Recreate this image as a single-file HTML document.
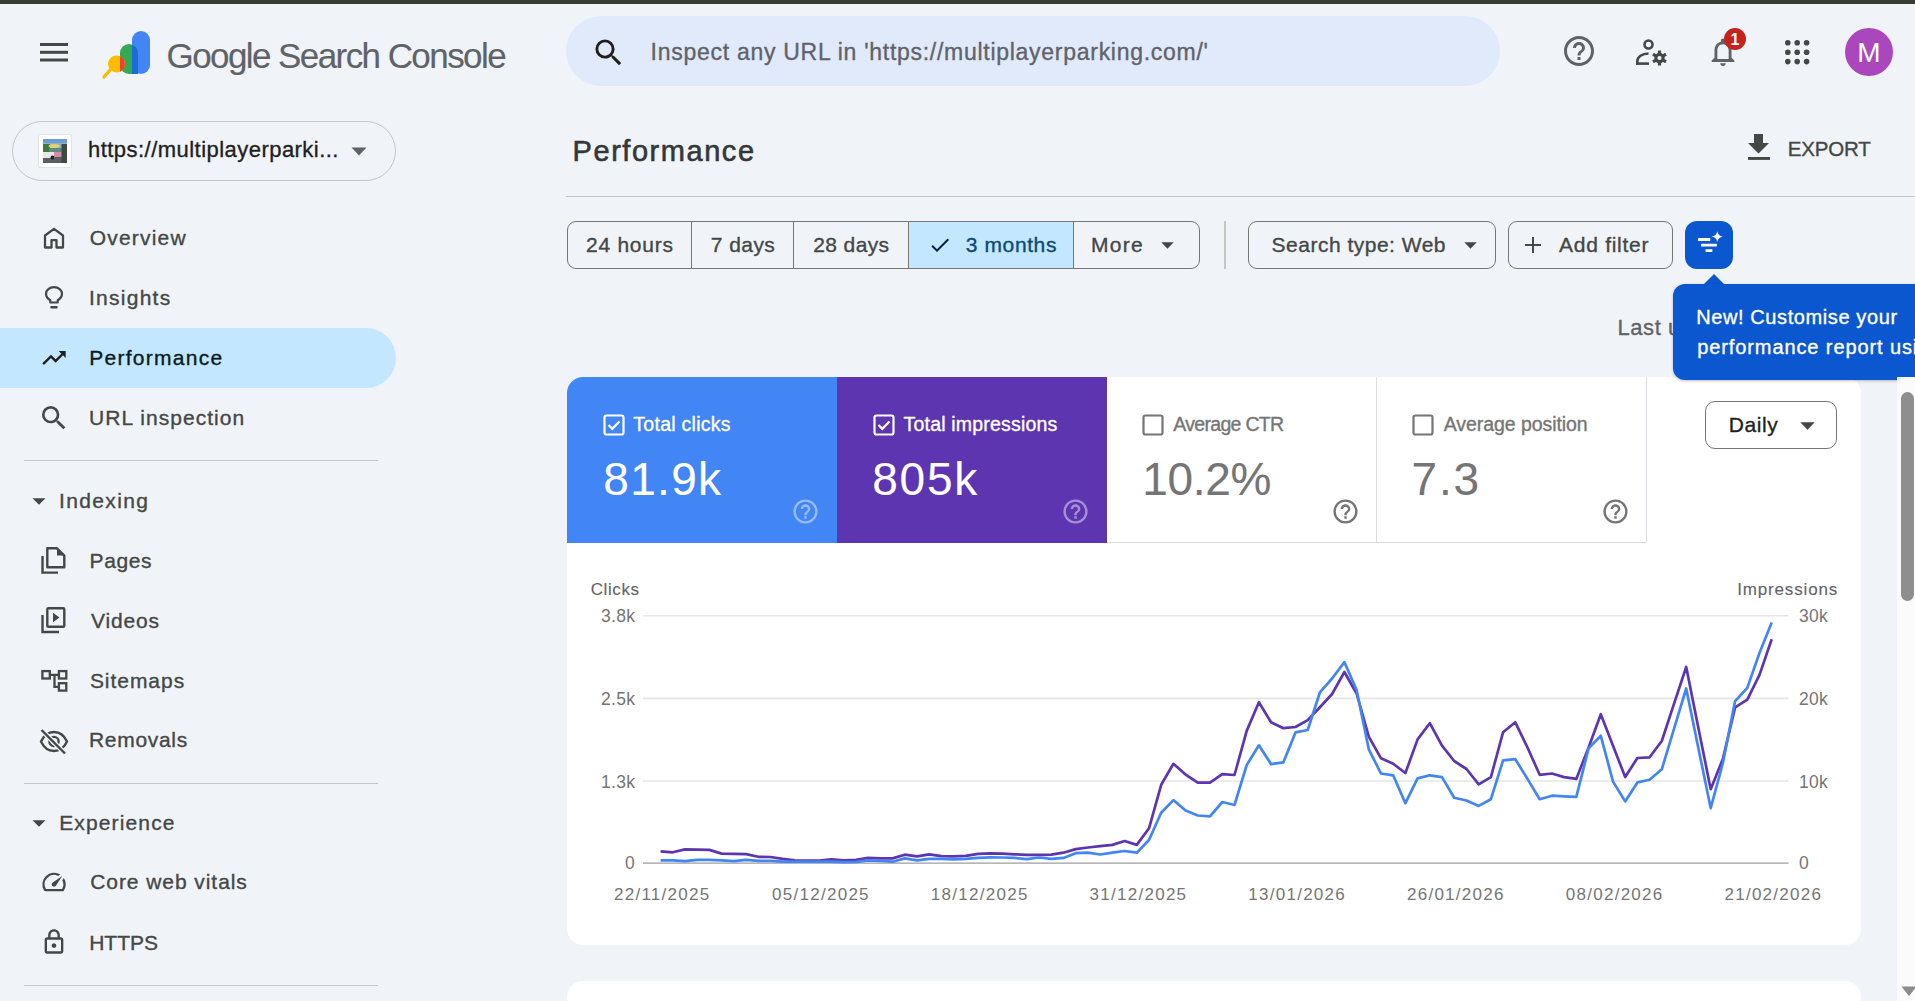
<!DOCTYPE html>
<html><head><meta charset="utf-8">
<style>
*{box-sizing:border-box;margin:0;padding:0}
html,body{width:1915px;height:1001px;overflow:hidden;background:#f0f4f9;font-family:"Liberation Sans",sans-serif;color:#1f1f1f}
.a{position:absolute}
.t{position:absolute;white-space:nowrap;line-height:1;-webkit-text-stroke:0.35px currentColor}
.hr{position:absolute;height:1px;background:#c7c7c7}
.xl{-webkit-text-stroke:0 !important;top:886.2px;width:120px;text-align:center;font-size:17px;color:#757575;letter-spacing:1.27px;text-indent:3.3px}
.yl{-webkit-text-stroke:0 !important;font-size:17.5px;color:#757575;letter-spacing:0.3px}
svg{position:absolute;overflow:visible}
</style></head><body>
<div class="a" style="left:0;top:0;width:1915px;height:4px;background:#373d31"></div>

<!-- hamburger -->
<svg style="left:40px;top:43px" width="28" height="19" viewBox="0 0 28 19"><rect x="0" y="0" width="28" height="3" fill="#444746"/><rect x="0" y="7.8" width="28" height="3" fill="#444746"/><rect x="0" y="15.5" width="28" height="3" fill="#444746"/></svg>

<!-- logo -->
<svg style="left:100px;top:28px" width="54" height="52" viewBox="0 0 54 52">
  <rect x="32" y="3" width="18" height="43" rx="9" fill="#4285f4"/>
  <path d="M20 25 a9 9 0 0 1 18 0 V46 H29 a9 9 0 0 1 -9 -9z" fill="#34a853"/>
  <path d="M32 17 a9 9 0 0 1 6 8 V46 H32z" fill="#1a6dd9"/>
  <line x1="4" y1="49" x2="10" y2="42" stroke="#fbbc04" stroke-width="3.4" stroke-linecap="round"/>
  <circle cx="16.5" cy="36" r="8.5" fill="#fbbc04"/>
  <path d="M20 28.3 a8.5 8.5 0 0 1 0 15.4z" fill="#ea4335"/>
</svg>
<div class="t" style="left:166.5px;top:38.4px;font-size:35px;letter-spacing:-1.575px;color:#5f6368;-webkit-text-stroke:0.15px currentColor">Google Search Console</div>

<!-- search -->
<div class="a" style="left:566px;top:16px;width:934px;height:70px;border-radius:35px;background:#e1eafb"></div>
<svg style="left:591px;top:35px" width="35.4" height="35.4" viewBox="0 0 24 24"><path fill="#1f1f1f" d="M15.5 14h-.79l-.28-.27A6.471 6.471 0 0 0 16 9.5 6.5 6.5 0 1 0 9.5 16c1.61 0 3.09-.59 4.23-1.57l.27.28v.79l5 4.99L20.49 19l-4.99-5zm-6 0C7.01 14 5 11.99 5 9.5S7.01 5 9.5 5 14 7.01 14 9.5 11.99 14 9.5 14z"/></svg>
<div class="t" style="left:650.6px;top:40.6px;font-size:23px;letter-spacing:0.722px;color:#5f6368;">Inspect any URL in 'https://multiplayerparking.com/'</div>

<!-- right icons -->
<svg style="left:1561px;top:33px" width="36" height="36" viewBox="0 0 24 24"><path fill="#5f6368" d="M11 18h2v-2h-2v2zm1-16C6.48 2 2 6.48 2 12s4.48 10 10 10 10-4.48 10-10S17.52 2 12 2zm0 18c-4.41 0-8-3.59-8-8s3.59-8 8-8 8 3.59 8 8-3.59 8-8 8zm0-14c-2.21 0-4 1.79-4 4h2c0-1.1.9-2 2-2s2 .9 2 2c0 2-3 1.75-3 5h2c0-2.25 3-2.5 3-5 0-2.21-1.79-4-4-4z"/></svg>
<svg style="left:1636px;top:39px" width="32" height="27" viewBox="0 0 32 27">
  <circle cx="12.5" cy="5.5" r="4" fill="none" stroke="#444746" stroke-width="2.6"/>
  <path d="M1.3 25.5 V22.5 C1.3 18 6 14.5 12.5 14.5" fill="none" stroke="#444746" stroke-width="2.6"/>
  <line x1="0" y1="24.6" x2="13" y2="24.6" stroke="#444746" stroke-width="2.6"/>
  <g transform="translate(23.5 19)" fill="#444746">
    <circle r="5.2"/>
    <rect x="-1.6" y="-7.6" width="3.2" height="15.2" rx="0.5"/>
    <rect x="-1.6" y="-7.6" width="3.2" height="15.2" rx="0.5" transform="rotate(60)"/>
    <rect x="-1.6" y="-7.6" width="3.2" height="15.2" rx="0.5" transform="rotate(120)"/>
  </g>
  <circle cx="23.5" cy="19" r="2.1" fill="#f0f4f9"/>
</svg>
<svg style="left:1706px;top:35px" width="34" height="34" viewBox="0 0 24 24"><path fill="#5f6368" d="M12 22c1.1 0 2-.9 2-2h-4c0 1.1.9 2 2 2zm6-6v-5c0-3.07-1.64-5.64-4.5-6.32V4c0-.83-.67-1.5-1.5-1.5s-1.5.67-1.5 1.5v.68C7.63 5.36 6 7.92 6 11v5l-2 2v1h16v-1l-2-2zm-2 1H8v-6c0-2.48 1.51-4.5 4-4.5s4 2.02 4 4.5v6z"/></svg>
<div class="a" style="left:1724px;top:28px;width:22px;height:22px;border-radius:50%;background:#c5221f;color:#fff;font-size:16px;font-weight:bold;text-align:center;line-height:23px">1</div>
<svg style="left:1785px;top:40px" width="25" height="25" viewBox="0 0 25 25" fill="#444746">
  <circle cx="2.8" cy="2.8" r="2.8"/><circle cx="12.2" cy="2.8" r="2.8"/><circle cx="21.6" cy="2.8" r="2.8"/>
  <circle cx="2.8" cy="12.2" r="2.8"/><circle cx="12.2" cy="12.2" r="2.8"/><circle cx="21.6" cy="12.2" r="2.8"/>
  <circle cx="2.8" cy="21.6" r="2.8"/><circle cx="12.2" cy="21.6" r="2.8"/><circle cx="21.6" cy="21.6" r="2.8"/>
</svg>
<div class="a" style="left:1845px;top:28px;width:48px;height:48px;border-radius:50%;background:#ab47bc;color:#fff;font-size:28px;text-align:center;line-height:49px">M</div>

<!-- property pill -->
<div class="a" style="left:12px;top:121px;width:384px;height:60px;border:1px solid #c4c7c5;border-radius:30px"></div>
<div class="a" style="left:38px;top:134px;width:34px;height:34px;background:#fff;border:1px solid #e3e3e3;border-radius:2px"></div>
<svg style="left:43px;top:139px" width="24" height="24" viewBox="0 0 24 24">
<rect width="24" height="24" fill="#8fb0c8"/>
<rect y="0" width="24" height="4" fill="#6e9bd0"/>
<rect x="0" y="5" width="7" height="9" fill="#3f7a3a"/>
<rect x="6" y="9" width="13" height="5" fill="#5d8c86"/>
<ellipse cx="11" cy="7" rx="5.5" ry="2" fill="#e6d26a"/>
<rect x="0" y="18" width="24" height="6" fill="#5b5f63"/>
<rect x="0" y="13" width="12" height="6" fill="#e8e8ea"/>
<rect x="11" y="13" width="8" height="5" fill="#d78aa8"/>
<circle cx="9.5" cy="18.5" r="2" fill="#222"/>
<rect x="18.5" y="5" width="5.5" height="19" fill="#3d4a40"/>
</svg>
<div class="t" style="left:88.0px;top:139.2px;font-size:22px;letter-spacing:0.462px;color:#1f1f1f;">https://multiplayerparki...</div>
<svg style="left:351px;top:147px" width="16" height="9" viewBox="0 0 16 9"><path d="M0.5 0.5h15L8 8.5z" fill="#5f6368"/></svg>

<!-- nav -->
<div class="a" style="left:0;top:328px;width:396px;height:60px;background:#c2e7ff;border-radius:0 30px 30px 0"></div>
<div class="t" style="left:89.8px;top:227.4px;font-size:21px;letter-spacing:1.186px;color:#444746;">Overview</div>
<div class="t" style="left:89.0px;top:287.2px;font-size:21px;letter-spacing:1.257px;color:#444746;">Insights</div>
<div class="t" style="left:89.2px;top:347.2px;font-size:21px;letter-spacing:1.28px;color:#0b1a24;">Performance</div>
<div class="t" style="left:89.1px;top:407.3px;font-size:21px;letter-spacing:1.038px;color:#444746;">URL inspection</div>
<div class="t" style="left:59.0px;top:490.2px;font-size:21px;letter-spacing:1.357px;color:#444746;">Indexing</div>
<div class="t" style="left:89.5px;top:550.2px;font-size:21px;letter-spacing:0.625px;color:#444746;">Pages</div>
<div class="t" style="left:90.9px;top:610.2px;font-size:21px;letter-spacing:0.88px;color:#444746;">Videos</div>
<div class="t" style="left:89.9px;top:669.8px;font-size:21px;letter-spacing:0.957px;color:#444746;">Sitemaps</div>
<div class="t" style="left:89.0px;top:729.2px;font-size:21px;letter-spacing:0.686px;color:#444746;">Removals</div>
<div class="t" style="left:59.2px;top:811.8px;font-size:21px;letter-spacing:1.133px;color:#444746;">Experience</div>
<div class="t" style="left:90.2px;top:870.9px;font-size:21px;letter-spacing:0.936px;color:#444746;">Core web vitals</div>
<div class="t" style="left:89.2px;top:931.6px;font-size:21px;letter-spacing:-0.025px;color:#444746;">HTTPS</div>
<div class="hr" style="left:24px;top:460px;width:354px"></div>
<div class="hr" style="left:24px;top:783px;width:354px"></div>
<div class="hr" style="left:24px;top:985px;width:354px"></div>
<!-- nav icons -->
<svg style="left:43px;top:227px" width="22" height="22" viewBox="0 0 22 22"><path d="M2 20.5 V8.5 L11 1.8 L20 8.5 V20.5 H13.5 V13.2 H8.5 V20.5 Z" fill="none" stroke="#444746" stroke-width="2.3" stroke-linejoin="round"/></svg>
<svg style="left:44px;top:286px" width="20" height="24" viewBox="0 0 20 24"><path d="M6.3 16.5 V14.2 C3.6 12.6 2 10.4 2 7.7 C2 4.2 5.5 1.2 10 1.2 C14.5 1.2 18 4.2 18 7.7 C18 10.4 16.4 12.6 13.7 14.2 V16.5 Z" fill="none" stroke="#444746" stroke-width="2.2" stroke-linejoin="round"/><rect x="6.3" y="20" width="7.4" height="2.4" rx="1" fill="#444746"/></svg>
<svg style="left:40px;top:344px" width="28" height="28" viewBox="0 0 24 24"><path fill="#1f1f1f" d="M16 6l2.29 2.29-4.88 4.88-4-4L2 16.59 3.41 18l6-6 4 4 6.3-6.29L22 12V6z"/></svg>
<svg style="left:38px;top:402px" width="32" height="32" viewBox="0 0 24 24"><path fill="#444746" d="M15.5 14h-.79l-.28-.27A6.471 6.471 0 0 0 16 9.5 6.5 6.5 0 1 0 9.5 16c1.61 0 3.09-.59 4.23-1.57l.27.28v.79l5 4.99L20.49 19l-4.99-5zm-6 0C7.01 14 5 11.99 5 9.5S7.01 5 9.5 5 14 7.01 14 9.5 11.99 14 9.5 14z"/></svg>
<svg style="left:32px;top:498px" width="14" height="7" viewBox="0 0 14 7"><path d="M0.5 0.3h13L7 6.8z" fill="#444746"/></svg>
<svg style="left:32px;top:820px" width="14" height="7" viewBox="0 0 14 7"><path d="M0.5 0.3h13L7 6.8z" fill="#444746"/></svg>
<svg style="left:41px;top:547px" width="25" height="28" viewBox="0 0 25 28"><path d="M1.5 9 V25.6 H17" fill="none" stroke="#444746" stroke-width="2.4"/><path d="M6.3 1.3 H16 L23.3 8.6 V20.3 H6.3 Z" fill="none" stroke="#444746" stroke-width="2.4" stroke-linejoin="round"/><path d="M16 1.3 V8.6 H23.3z" fill="#444746"/></svg>
<svg style="left:41px;top:607px" width="25" height="27" viewBox="0 0 25 27"><path d="M1.5 8 V25 H18" fill="none" stroke="#444746" stroke-width="2.4"/><rect x="6.3" y="1.3" width="17" height="18.5" rx="1" fill="none" stroke="#444746" stroke-width="2.4"/><path d="M12 5.8 V15.2 L18.5 10.5z" fill="#444746"/></svg>
<svg style="left:41px;top:668px" width="26" height="25" viewBox="0 0 26 25" fill="none" stroke="#444746" stroke-width="2.3"><rect x="1.4" y="3.1" width="7.4" height="7.4"/><rect x="17.9" y="3.1" width="7.4" height="7.4"/><rect x="17.9" y="15.2" width="7.4" height="7.4"/><path d="M8.8 6.8 H17.9 M13.5 6.8 V18.9 H17.9"/></svg>
<svg style="left:38px;top:726px" width="32" height="32" viewBox="0 0 32 32"><path d="M3 15.5 C6 9 10.5 6 16 6 C21.5 6 26 9 29 15.5 C26 22 21.5 25 16 25 C10.5 25 6 22 3 15.5Z" fill="none" stroke="#444746" stroke-width="2.4"/><circle cx="16" cy="15.5" r="4.6" fill="none" stroke="#444746" stroke-width="2.4"/><line x1="3.5" y1="4" x2="27" y2="27.5" stroke="#f0f4f9" stroke-width="5"/><line x1="3.5" y1="4" x2="27" y2="27.5" stroke="#444746" stroke-width="2.4"/></svg>
<svg style="left:40px;top:868px" width="28" height="28" viewBox="0 0 24 24"><path fill="#444746" d="M20.38 8.57l-1.23 1.85a8 8 0 0 1-.22 7.58H5.07A8 8 0 0 1 15.58 6.85l1.85-1.23A10 10 0 0 0 3.35 19a2 2 0 0 0 1.72 1h13.85a2 2 0 0 0 1.74-1 10 10 0 0 0-.27-10.440zm-9.79 6.84a2 2 0 0 0 2.830 0l5.66-8.49-8.49 5.66a2 2 0 0 0 0 2.83z"/></svg>
<svg style="left:40px;top:928px" width="28" height="28" viewBox="0 0 24 24"><path fill="#444746" d="M18 8h-1V6c0-2.76-2.24-5-5-5S7 3.24 7 6v2H6c-1.1 0-2 .9-2 2v10c0 1.1.9 2 2 2h12c1.1 0 2-.9 2-2V10c0-1.1-.9-2-2-2zM9 6c0-1.66 1.34-3 3-3s3 1.34 3 3v2H9V6zm9 14H6V10h12v10zm-6-3c1.1 0 2-.9 2-2s-.9-2-2-2-2 .9-2 2 .9 2 2 2z"/></svg>

<!-- MAIN header -->
<div class="t" style="left:572.6px;top:136.5px;font-size:29px;letter-spacing:1.54px;color:#34373a;-webkit-text-stroke:0.6px currentColor">Performance</div>
<svg style="left:1748px;top:134px" width="22" height="26" viewBox="0 0 22 26"><path d="M6 0 H15 V9 H21 L10.5 19.5 L0 9 H6z" fill="#444746"/><rect x="0" y="23" width="22" height="2.9" fill="#444746"/></svg>
<div class="t" style="left:1787.8px;top:138.5px;font-size:20.5px;letter-spacing:-0.2px;color:#444746;">EXPORT</div>
<div class="hr" style="left:566px;top:196px;width:1349px;background:#c4c7c5"></div>

<!-- chips -->
<div class="a" style="left:908px;top:221px;width:166px;height:48px;background:#c2e7ff"></div>
<div class="a" style="left:567px;top:221px;width:633px;height:48px;border:1px solid #747775;border-radius:9px"></div>
<div class="a" style="left:691px;top:221px;width:1px;height:48px;background:#747775"></div>
<div class="a" style="left:793px;top:221px;width:1px;height:48px;background:#747775"></div>
<div class="a" style="left:908px;top:221px;width:1px;height:48px;background:#747775"></div>
<div class="a" style="left:1073px;top:221px;width:1px;height:48px;background:#747775"></div>
<svg style="left:928px;top:233px" width="24" height="24" viewBox="0 0 24 24"><path fill="#041e49" d="M9 16.17L4.83 12l-1.42 1.42L9 19 21 7l-1.41-1.41z"/></svg>
<svg style="left:1161px;top:242px" width="13" height="7" viewBox="0 0 13 7"><path d="M0.3 0.3h12.4L6.5 6.8z" fill="#444746"/></svg>
<div class="a" style="left:1224px;top:221px;width:2px;height:48px;background:#c4c7c5"></div>
<div class="a" style="left:1248px;top:221px;width:248px;height:48px;border:1px solid #747775;border-radius:9px"></div>
<svg style="left:1464px;top:242px" width="13" height="7" viewBox="0 0 13 7"><path d="M0.3 0.3h12.4L6.5 6.8z" fill="#444746"/></svg>
<div class="a" style="left:1508px;top:221px;width:165px;height:48px;border:1px solid #747775;border-radius:9px"></div>
<svg style="left:1521px;top:233px" width="24" height="24" viewBox="0 0 24 24"><path fill="#444746" d="M20 13h-7v7h-2v-7H4v-2h7V4h2v7h7v2z"/></svg>
<div class="t" style="left:586.0px;top:234.3px;font-size:21px;letter-spacing:0.743px;color:#444746;">24 hours</div>
<div class="t" style="left:710.8px;top:234.3px;font-size:21px;letter-spacing:0.44px;color:#444746;">7 days</div>
<div class="t" style="left:813.3px;top:234.3px;font-size:21px;letter-spacing:0.367px;color:#444746;">28 days</div>
<div class="t" style="left:965.8px;top:234.1px;font-size:21px;letter-spacing:0.6px;color:#0b4a73;">3 months</div>
<div class="t" style="left:1091.0px;top:234.3px;font-size:21px;letter-spacing:1.3px;color:#444746;">More</div>
<div class="t" style="left:1271.6px;top:234.3px;font-size:21px;letter-spacing:0.493px;color:#444746;">Search type: Web</div>
<div class="t" style="left:1559.0px;top:234.3px;font-size:21px;letter-spacing:0.733px;color:#444746;">Add filter</div>
<div class="a" style="left:1685px;top:221px;width:48px;height:48px;background:#0b57d0;border-radius:12px"></div>
<svg style="left:1690px;top:226px" width="36" height="36" viewBox="0 0 36 36" fill="#fff"><rect x="8" y="12.1" width="12.3" height="2.8" rx="0.4"/><rect x="11" y="17.8" width="15.9" height="2.7" rx="0.4"/><rect x="15.5" y="23.2" width="6.9" height="2.7" rx="0.4"/><path d="M27.3 5.2 Q28.2 9.9 32.8 10.6 Q28.2 11.4 27.3 16 Q26.4 11.4 21.8 10.6 Q26.4 9.9 27.3 5.2z"/></svg>
<div class="t" style="left:1617.4px;top:317.4px;font-size:22px;letter-spacing:0px;color:#5f6368;letter-spacing:0.6px">Last updated: 5 hours ago</div>

<!-- CARD -->
<div class="a" style="left:567px;top:377px;width:1294px;height:568px;background:#fff;border-radius:16px"></div>
<div class="a" style="left:567px;top:981px;width:1294px;height:40px;background:#fff;border-radius:16px"></div>
<div class="a" style="left:567px;top:377px;width:270px;height:166px;background:#4285f4;border-radius:16px 0 0 0"></div>
<div class="a" style="left:837px;top:377px;width:270px;height:166px;background:#5e35b1"></div>
<div class="a" style="left:1107px;top:542px;width:540px;height:1px;background:#dadce0"></div>
<div class="a" style="left:1376px;top:377px;width:1px;height:166px;background:#dadce0"></div>
<div class="a" style="left:1646px;top:377px;width:1px;height:166px;background:#dadce0"></div>
<!-- checkboxes -->
<svg style="left:602.8px;top:414.3px" width="22" height="22" viewBox="0 0 22 22"><rect x="1.5" y="1.5" width="19" height="19" rx="2" fill="none" stroke="#fff" stroke-width="2.2"/><path d="M5.5 11 L9.3 14.8 L16.5 7.5" fill="none" stroke="#fff" stroke-width="2.3"/></svg>
<svg style="left:872.8px;top:414.3px" width="22" height="22" viewBox="0 0 22 22"><rect x="1.5" y="1.5" width="19" height="19" rx="2" fill="none" stroke="#fff" stroke-width="2.2"/><path d="M5.5 11 L9.3 14.8 L16.5 7.5" fill="none" stroke="#fff" stroke-width="2.3"/></svg>
<svg style="left:1142px;top:414px" width="22" height="22" viewBox="0 0 22 22"><rect x="1.5" y="1.5" width="19" height="19" rx="2" fill="none" stroke="#757575" stroke-width="2.2"/></svg>
<svg style="left:1412px;top:414px" width="22" height="22" viewBox="0 0 22 22"><rect x="1.5" y="1.5" width="19" height="19" rx="2" fill="none" stroke="#757575" stroke-width="2.2"/></svg>
<div class="t" style="left:633.3px;top:415.4px;font-size:19.5px;letter-spacing:0.273px;color:#ffffff;">Total clicks</div>
<div class="t" style="left:603.3px;top:456.1px;font-size:46px;letter-spacing:1.3px;color:#ffffff;-webkit-text-stroke:0.1px currentColor">81.9k</div>
<div class="t" style="left:903.6px;top:415.4px;font-size:19.5px;letter-spacing:0.188px;color:#ffffff;">Total impressions</div>
<div class="t" style="left:872.3px;top:456.1px;font-size:46px;letter-spacing:1.733px;color:#ffffff;-webkit-text-stroke:0.1px currentColor">805k</div>
<div class="t" style="left:1173.3px;top:415.3px;font-size:19.5px;letter-spacing:-0.7px;color:#757575;">Average CTR</div>
<div class="t" style="left:1142.2px;top:456.1px;font-size:46px;letter-spacing:-0.3px;color:#757575;-webkit-text-stroke:0.1px currentColor">10.2%</div>
<div class="t" style="left:1443.7px;top:415.3px;font-size:19.5px;letter-spacing:-0.06px;color:#757575;">Average position</div>
<div class="t" style="left:1411.5px;top:456.1px;font-size:46px;letter-spacing:1.85px;color:#757575;-webkit-text-stroke:0.1px currentColor">7.3</div>
<!-- help icons -->
<svg style="left:791px;top:497px" width="29" height="29" viewBox="0 0 24 24"><path fill="rgba(255,255,255,0.45)" d="M11 18h2v-2h-2v2zm1-16C6.48 2 2 6.48 2 12s4.48 10 10 10 10-4.48 10-10S17.52 2 12 2zm0 18c-4.41 0-8-3.590-8-8s3.59-8 8-8 8 3.59 8 8-3.59 8-8 8zm0-14c-2.21 0-4 1.79-4 4h2c0-1.1.9-2 2-2s2 .9 2 2c0 2-3 1.75-3 5h2c0-2.25 3-2.5 3-5 0-2.21-1.79-4-4-4z"/></svg>
<svg style="left:1061px;top:497px" width="29" height="29" viewBox="0 0 24 24"><path fill="rgba(255,255,255,0.45)" d="M11 18h2v-2h-2v2zm1-16C6.48 2 2 6.48 2 12s4.48 10 10 10 10-4.48 10-10S17.52 2 12 2zm0 18c-4.41 0-8-3.590-8-8s3.59-8 8-8 8 3.59 8 8-3.59 8-8 8zm0-14c-2.21 0-4 1.79-4 4h2c0-1.1.9-2 2-2s2 .9 2 2c0 2-3 1.75-3 5h2c0-2.25 3-2.5 3-5 0-2.21-1.79-4-4-4z"/></svg>
<svg style="left:1331px;top:497px" width="29" height="29" viewBox="0 0 24 24"><path fill="#757575" d="M11 18h2v-2h-2v2zm1-16C6.48 2 2 6.48 2 12s4.48 10 10 10 10-4.48 10-10S17.52 2 12 2zm0 18c-4.41 0-8-3.590-8-8s3.59-8 8-8 8 3.59 8 8-3.59 8-8 8zm0-14c-2.21 0-4 1.79-4 4h2c0-1.1.9-2 2-2s2 .9 2 2c0 2-3 1.75-3 5h2c0-2.25 3-2.5 3-5 0-2.21-1.79-4-4-4z"/></svg>
<svg style="left:1601px;top:497px" width="29" height="29" viewBox="0 0 24 24"><path fill="#757575" d="M11 18h2v-2h-2v2zm1-16C6.48 2 2 6.48 2 12s4.48 10 10 10 10-4.48 10-10S17.52 2 12 2zm0 18c-4.41 0-8-3.590-8-8s3.59-8 8-8 8 3.59 8 8-3.59 8-8 8zm0-14c-2.21 0-4 1.79-4 4h2c0-1.1.9-2 2-2s2 .9 2 2c0 2-3 1.75-3 5h2c0-2.25 3-2.5 3-5 0-2.21-1.79-4-4-4z"/></svg>
<!-- daily -->
<div class="a" style="left:1705px;top:401px;width:132px;height:48px;border:1px solid #747775;border-radius:10px"></div>
<div class="t" style="left:1728.7px;top:414.4px;font-size:21px;letter-spacing:0.575px;color:#1f1f1f;">Daily</div>
<svg style="left:1800px;top:422px" width="15" height="8" viewBox="0 0 15 8"><path d="M0.3 0.3h14.4L7.5 7.8z" fill="#444746"/></svg>

<!-- chart -->
<div class="t" style="left:590.7px;top:581.4px;font-size:17px;letter-spacing:0.6px;color:#5f6368;-webkit-text-stroke:0.1px currentColor">Clicks</div>
<div class="t" style="left:1737.2px;top:581.4px;font-size:17px;letter-spacing:0.84px;color:#5f6368;-webkit-text-stroke:0.1px currentColor">Impressions</div>
<svg style="left:0;top:0" width="1915" height="1001">
  <g stroke="#e6e6e6" stroke-width="1.6">
    <line x1="643" y1="615.7" x2="1788.5" y2="615.7"/>
    <line x1="643" y1="698.4" x2="1788.5" y2="698.4"/>
    <line x1="643" y1="781" x2="1788.5" y2="781"/>
  </g>
  <line x1="643" y1="863.1" x2="1788.5" y2="863.1" stroke="#9e9e9e" stroke-width="1.4"/>
  <polyline points="660.6,851.4 672.8,852.3 685.0,849.4 697.2,849.7 709.4,849.9 721.6,853.6 733.9,853.9 746.1,854.1 758.3,856.8 770.5,857.0 782.7,858.8 794.9,860.3 807.1,860.6 819.3,860.5 831.5,859.4 843.7,860.4 856.0,859.9 868.2,857.9 880.4,858.4 892.6,858.4 904.8,854.7 917.0,856.4 929.2,854.4 941.4,856.1 953.6,856.4 965.8,855.9 978.1,853.9 990.3,853.4 1002.5,853.7 1014.7,854.3 1026.9,854.9 1039.1,854.8 1051.3,854.7 1063.5,852.7 1075.7,849.1 1087.9,847.5 1100.2,846.2 1112.4,844.9 1124.6,841.0 1136.8,844.9 1149.0,828.3 1161.2,784.8 1173.4,763.8 1185.6,774.6 1197.8,782.7 1210.0,782.7 1222.3,774.1 1234.5,775.0 1246.7,730.9 1258.9,702.2 1271.1,722.3 1283.3,728.2 1295.5,727.0 1307.7,720.1 1319.9,707.2 1332.1,694.0 1344.4,672.0 1356.6,693.5 1368.8,736.7 1381.0,758.3 1393.2,763.7 1405.4,773.0 1417.6,739.4 1429.8,723.2 1442.0,745.7 1454.2,761.0 1466.5,769.0 1478.7,784.3 1490.9,777.1 1503.1,732.2 1515.3,722.3 1527.5,747.5 1539.7,774.8 1551.9,773.5 1564.1,777.1 1576.3,778.9 1588.6,747.5 1600.8,714.2 1613.0,745.7 1625.2,777.1 1637.4,758.0 1649.6,757.3 1661.8,741.0 1674.0,703.8 1686.2,667.0 1698.4,728.0 1710.7,789.2 1722.9,758.8 1735.1,707.4 1747.3,699.6 1759.5,674.9 1771.7,639.3" fill="none" stroke="#5e35b1" stroke-width="2.7" stroke-linejoin="round"/>
  <polyline points="660.6,860.3 672.8,860.3 685.0,861.2 697.2,859.9 709.4,859.9 721.6,860.3 733.9,861.2 746.1,859.9 758.3,860.8 770.5,860.8 782.7,861.6 794.9,861.6 807.1,861.6 819.3,861.7 831.5,861.7 843.7,862.1 856.0,861.9 868.2,860.4 880.4,860.9 892.6,861.7 904.8,858.4 917.0,860.4 929.2,858.9 941.4,858.9 953.6,859.4 965.8,858.9 978.1,857.9 990.3,857.4 1002.5,857.5 1014.7,857.9 1026.9,859.2 1039.1,857.5 1051.3,858.8 1063.5,857.9 1075.7,853.2 1087.9,852.7 1100.2,854.5 1112.4,852.7 1124.6,851.0 1136.8,852.7 1149.0,840.0 1161.2,812.7 1173.4,800.1 1185.6,810.6 1197.8,815.5 1210.0,816.4 1222.3,802.0 1234.5,805.0 1246.7,765.1 1258.9,745.3 1271.1,764.2 1283.3,762.4 1295.5,732.4 1307.7,730.0 1319.9,692.3 1332.1,678.5 1344.4,662.1 1356.6,690.0 1368.8,749.3 1381.0,773.5 1393.2,775.3 1405.4,803.2 1417.6,778.4 1429.8,775.3 1442.0,777.1 1454.2,797.8 1466.5,800.5 1478.7,805.9 1490.9,799.2 1503.1,760.4 1515.3,759.2 1527.5,778.9 1539.7,799.2 1551.9,795.7 1564.1,796.4 1576.3,796.9 1588.6,748.4 1600.8,735.8 1613.0,781.6 1625.2,801.4 1637.4,782.4 1649.6,779.7 1661.8,769.3 1674.0,728.8 1686.2,688.5 1698.4,748.3 1710.7,808.1 1722.9,763.0 1735.1,701.1 1747.3,687.9 1759.5,652.9 1771.7,622.5" fill="none" stroke="#4285f4" stroke-width="2.7" stroke-linejoin="round"/>
</svg>
<div class="t yl" style="left:601px;top:608.3px">3.8k</div>
<div class="t yl" style="left:601px;top:691.0px">2.5k</div>
<div class="t yl" style="left:601px;top:773.6px">1.3k</div>
<div class="t yl" style="left:625px;top:855.2px">0</div>
<div class="t yl" style="left:1799px;top:608.3px">30k</div>
<div class="t yl" style="left:1799px;top:691.0px">20k</div>
<div class="t yl" style="left:1799px;top:773.6px">10k</div>
<div class="t yl" style="left:1799px;top:855.2px">0</div>
<div class="t xl" style="left:600.6px">22/11/2025</div><div class="t xl" style="left:759.3px">05/12/2025</div><div class="t xl" style="left:918.1px">18/12/2025</div><div class="t xl" style="left:1076.8px">31/12/2025</div><div class="t xl" style="left:1235.5px">13/01/2026</div><div class="t xl" style="left:1394.2px">26/01/2026</div><div class="t xl" style="left:1553.0px">08/02/2026</div><div class="t xl" style="left:1711.7px">21/02/2026</div>

<!-- tooltip -->
<svg style="left:1703px;top:273px" width="22" height="12" viewBox="0 0 22 12"><path d="M0 12 L11 1 L22 12z" fill="#0b57d0"/></svg>
<div class="a" style="left:1673px;top:284px;width:260px;height:96px;background:#0b57d0;border-radius:12px;box-shadow:0 1px 3px rgba(0,0,0,0.25)"></div>
<div class="t" style="left:1696.2px;top:306.9px;font-size:20px;letter-spacing:0.6px;color:#ffffff;">New! Customise your</div>
<div class="t" style="left:1697.2px;top:336.9px;font-size:20px;letter-spacing:0px;color:#ffffff;letter-spacing:0.9px">performance report using Gemini</div>

<!-- scrollbar -->
<div class="a" style="left:1897px;top:377px;width:18px;height:624px;background:#fbfbfb"></div>
<div class="a" style="left:1901px;top:392px;width:13px;height:209px;background:#8e8e8e;border-radius:7px"></div>
<svg style="left:1901px;top:986px" width="16" height="11" viewBox="0 0 16 11"><path d="M0.5 0.5 H15.5 L8.5 9.6 Q8 10.3 7.5 9.6z" fill="#8c8c8c"/></svg>
</body></html>
